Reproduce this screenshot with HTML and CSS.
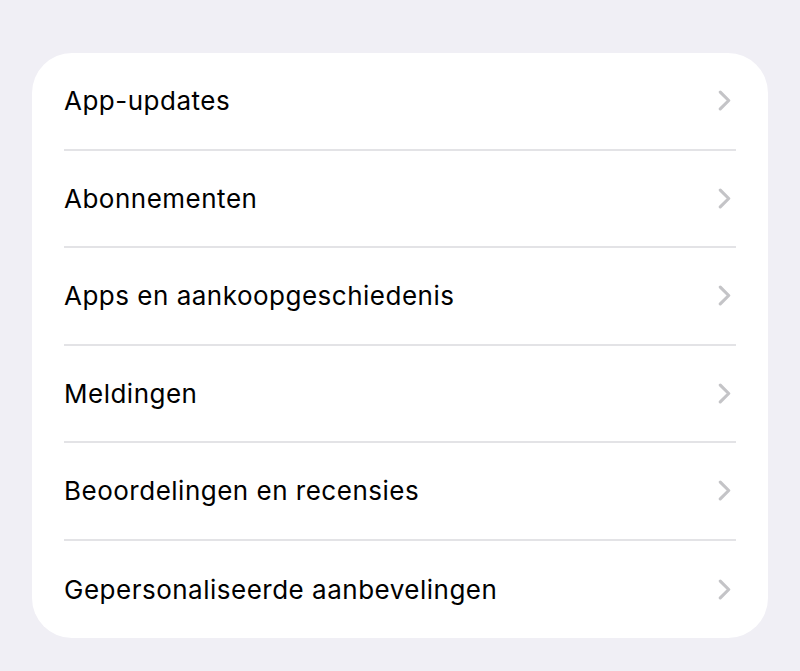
FILE: index.html
```html
<!DOCTYPE html>
<html lang="nl">
  <head>
    <meta charset="UTF-8" />
    <meta name="viewport" content="width=device-width, initial-scale=1.0" />
    <title>Instellingen</title>
    <link rel="stylesheet" href="styles.css">
  </head>
  <body>
    <div class="page">
      <ul class="list">
        <li class="list-item">
          <span class="label">App-updates</span>
          <svg class="chevron" viewBox="0 0 12 20"><path d="M2 2l8 8-8 8" /></svg>
        </li>
        <li class="list-item">
          <span class="label">Abonnementen</span>
          <svg class="chevron" viewBox="0 0 12 20"><path d="M2 2l8 8-8 8" /></svg>
        </li>
        <li class="list-item">
          <span class="label">Apps en aankoopgeschiedenis</span>
          <svg class="chevron" viewBox="0 0 12 20"><path d="M2 2l8 8-8 8" /></svg>
        </li>
        <li class="list-item">
          <span class="label">Meldingen</span>
          <svg class="chevron" viewBox="0 0 12 20"><path d="M2 2l8 8-8 8" /></svg>
        </li>
        <li class="list-item">
          <span class="label">Beoordelingen en recensies</span>
          <svg class="chevron" viewBox="0 0 12 20"><path d="M2 2l8 8-8 8" /></svg>
        </li>
        <li class="list-item">
          <span class="label">Gepersonaliseerde aanbevelingen</span>
          <svg class="chevron" viewBox="0 0 12 20"><path d="M2 2l8 8-8 8" /></svg>
        </li>
      </ul>
    </div>
  </body>
</html>
```

FILE: styles.css
```css
* {
  margin: 0;
  padding: 0;
  box-sizing: border-box;
}
body {
  background-color: #f0eff5;
  font-family: Inter, "Noto Sans", sans-serif;
  color: #000;
}
.page {
  padding: 53px 32px 34px;
}
.list {
  list-style: none;
  background-color: #fff;
  border-radius: 40px;
  padding: 0 32px;
}
.list-item {
  height: 97.5px;
  display: flex;
  align-items: center;
  justify-content: space-between;
  border-bottom: 2px solid #e3e3e6;
  padding-right: 5px;
}
.list-item:last-child {
  border-bottom: none;
}
.label {
  font-size: 26px;
  letter-spacing: 0.5px;
}
.chevron {
  width: 13px;
  height: 21px;
  fill: none;
  stroke: #c4c4c7;
  stroke-width: 3;
  stroke-linecap: round;
  stroke-linejoin: round;
}
```
